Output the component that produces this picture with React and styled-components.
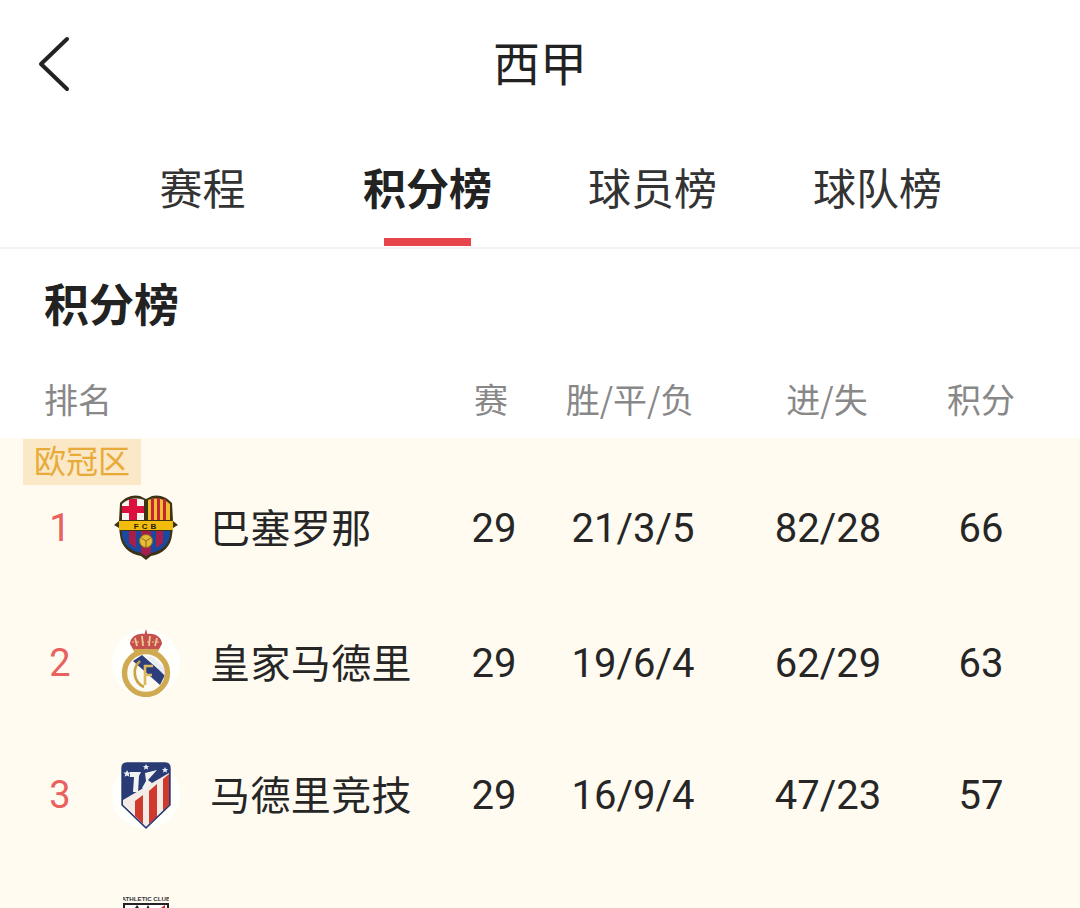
import styled, { createGlobalStyle } from "styled-components";

const GlobalStyle = createGlobalStyle`
  html, body {
    margin: 0;
    padding: 0;
    background: #fff;
  }
  body {
    font-family: "Noto Sans CJK SC", "Noto Sans", sans-serif;
    color: #222;
  }
`;

const Page = styled.div`
  width: 1080px;
  height: 908px;
  overflow: hidden;
  background: #fff;
`;

const Header = styled.div`
  height: 128px;
  display: grid;
  grid-template-columns: 1fr auto 1fr;
  align-items: center;
`;

const BackButton = styled.div`
  padding-left: 37px;
  display: flex;
  align-items: center;
`;

const Title = styled.div`
  font-size: 47px;
  line-height: 60px;
  margin-bottom: 6px;
`;

const Tabs = styled.div`
  display: grid;
  grid-template-columns: repeat(4, 225px);
  padding: 28px 90px 1px;
  border-bottom: 2px solid #f2f2f2;
`;

const Tab = styled.div`
  display: flex;
  flex-direction: column;
  align-items: center;
  gap: 22px;
  font-size: 43px;
  line-height: 60px;
  font-weight: ${({ $active }) => ($active ? 700 : 400)};
  color: ${({ $active }) => ($active ? "#222" : "#333")};
`;

const TabBar = styled.div`
  width: 87px;
  height: 8px;
  background: ${({ $active }) => ($active ? "#e8444c" : "transparent")};
`;

const SectionTitle = styled.h2`
  margin: 0;
  padding: 24px 0 0 44px;
  font-size: 45px;
  line-height: 60px;
  font-weight: 700;
  color: #222;
`;

const columns = "424px 140px 138px 252px 54px";

const TableHead = styled.div`
  display: grid;
  grid-template-columns: ${columns};
  align-items: center;
  margin-top: 41px;
  margin-bottom: 14px;
  height: 50px;
  font-size: 34px;
  line-height: 50px;
  color: #888;
`;

const HeadName = styled.div`
  padding-left: 44px;
`;

const HeadCell = styled.div`
  justify-self: center;
  white-space: nowrap;
  padding-right: ${({ $shift }) => $shift || 0}px;
`;

const Zone = styled.div`
  position: relative;
  padding-top: 23px;
  background: #fffbf1;
`;

const ZoneBadge = styled.div`
  position: absolute;
  top: 1px;
  left: 23px;
  width: 118px;
  height: 46px;
  padding-bottom: 6px;
  box-sizing: border-box;
  display: flex;
  align-items: center;
  justify-content: center;
  background: #fbe8c6;
  color: #e8ab3a;
  font-size: 32px;
  line-height: 40px;
`;

const Row = styled.div`
  display: grid;
  grid-template-columns: ${columns};
  align-items: center;
  height: ${({ $h }) => $h}px;
`;

const Team = styled.div`
  display: flex;
  align-items: center;
`;

const Rank = styled.div`
  width: 120px;
  text-align: center;
  font-family: Roboto, "Noto Sans", sans-serif;
  font-size: 38px;
  color: #e8615f;
`;

const Crest = styled.div`
  width: 68px;
  height: 68px;
  margin-left: -8px;
  margin-right: 30px;
  flex: none;
  border-radius: 50%;
  display: flex;
  align-items: center;
  justify-content: center;
  background: ${({ $plain }) => ($plain ? "transparent" : "#fffffc")};
`;

const TeamName = styled.div`
  font-size: 40px;
  letter-spacing: 0.4px;
  line-height: 56px;
  padding-bottom: 4px;
  white-space: nowrap;
  color: #262626;
`;

const Cell = styled.div`
  text-align: center;
  font-family: Roboto, "Noto Sans", sans-serif;
  font-size: 40px;
  white-space: nowrap;
  color: #262626;
`;

const BackIcon = () => (
  <svg width="34" height="56" viewBox="0 0 34 56">
    <path
      d="M30 3 L4 28 L30 53"
      fill="none"
      stroke="#222"
      strokeWidth="4"
      strokeLinecap="round"
      strokeLinejoin="round"
    />
  </svg>
);

const BarcaCrest = () => (
  <svg width="66" height="68" viewBox="0 0 66 68" style={{ flex: "none" }}>
    <path d="M33 66 L28 62 C16 60 8 52 7 41 L6 34 L1 31 L6 27 L7 9 C12 3 20 0 27 2 L33 5 L39 2 C46 0 54 3 59 9 L60 27 L65 31 L60 34 L59 41 C58 52 50 60 38 62 Z" fill="#3d3214" />
    <path d="M9 10 C14 5 22 3 31 6 V26 H9 Z" fill="#f7f3ee" />
    <path d="M16 5 H24 V12 H31 V19 H24 V26 H16 V19 H9 V12 H16 Z" fill="#dc0f3f" />
    <path d="M35 6 C43 3 52 5 57 10 V26 H35 Z" fill="#efc02a" />
    <path d="M38 5 H41 V26 H38 Z M44 4 H47 V26 H44 Z M50 5 H53 V26 H50 Z" fill="#c4243a" />
    <path d="M6 27 H60 V36 H6 Z" fill="#f2bc0c" />
    <text x="33.5" y="35" textAnchor="middle" fontFamily="Liberation Sans, sans-serif" fontWeight="700" fontSize="8" letterSpacing="3" fill="#1b1a12">FCB</text>
    <path d="M9 37 H57 V41 C56 50 49 57 38 59 L33 62 L28 59 C17 57 10 50 9 41 Z" fill="#1a4aa0" />
    <path d="M16 37 H23 V54 L16 49 Z M28 37 H38 V59 L33 62 L28 59 Z M43 37 H50 V49 L43 54 Z" fill="#a61e4c" />
    <circle cx="33" cy="47" r="6.5" fill="#e6bb36" stroke="#8a6a18" strokeWidth="1" />
    <path d="M28.5 44 L33 47 L37.5 44 M33 47 V53" stroke="#8a6a18" strokeWidth="1" fill="none" />
  </svg>
);

const MadridCrest = () => (
  <svg width="50" height="68" viewBox="0 0 50 68" style={{ flex: "none" }}>
    <path d="M25 0 L26.5 5 C35 4 41 9 41 15 L37 22 H13 L9 15 C9 9 15 4 23.5 5 Z" fill="#c65050" />
    <path d="M14 9 L16 17 M21 7 L22 17 M29 7 L28 17 M36 9 L34 17" stroke="#eccb8a" strokeWidth="1.8" />
    <path d="M11 13 L39 13" stroke="#e8c98a" strokeWidth="1" strokeDasharray="2 3" />
    <path d="M12 20 H38 L36 25 H14 Z" fill="#d0a94f" />
    <circle cx="25" cy="44" r="21" fill="#fbfaf3" />
    <path d="M12 32 L21 26 L44 46 L39 56 Z" fill="#2c3f7c" />
    <path d="M25 27 L31 28 L45 40 L44 47 Z" fill="#e9ecf3" />
    <path d="M19 32 C11 39 12 53 23 58" fill="none" stroke="#c9a245" strokeWidth="2.6" />
    <path d="M32 37 H24 V56 M24 46 H31" fill="none" stroke="#dcb95f" strokeWidth="2.6" />
    <circle cx="25" cy="44" r="21.5" fill="none" stroke="#d0aa52" strokeWidth="5.4" />
  </svg>
);

const AtleticoCrest = () => (
  <svg width="50" height="67" viewBox="0 0 50 67" style={{ flex: "none" }}>
    <path d="M6 1 H44 C47 1 49 3 49 6 V43 L25 66 L1 43 V6 C1 3 3 1 6 1 Z" fill="#2a3a74" />
    <path d="M48 11 V43 L25 65 L2 43 V38 Z" fill="#f3ece6" />
    <path d="M48 12 V43 L42 49 V17 Z M36 22 V55 L28 62 V29 Z M22 33 V62 L14 54 V39 Z" fill="#cf3a2c" />
    <path d="M9 10 H20 L18 14 L17 30 H12 L13 15 H9 Z M24 11 L36 8 L27 18 L31 21 L24 28 L21 26 L25 19 Z" fill="#f2f2f2" />
    <path d="M6 8 l1.2 2.4 2.6 .2 -2 1.6 .7 2.6 -2.5 -1.4 -2.4 1.4 .7 -2.6 -2 -1.6 2.6 -.2 Z M25 2 l1 2 2.2 .2 -1.7 1.3 .6 2.2 -2.1 -1.2 -2 1.2 .6 -2.2 -1.7 -1.3 2.2 -.2 Z M44 5 l1 2 2.2 .2 -1.7 1.3 .6 2.2 -2.1 -1.2 -2 1.2 .6 -2.2 -1.7 -1.3 2.2 -.2 Z" fill="#e9eef7" />
    <path d="M6 1 H44 C47 1 49 3 49 6 V43 L25 66 L1 43 V6 C1 3 3 1 6 1 Z" fill="none" stroke="#2a3a74" strokeWidth="1.4" />
  </svg>
);

const AthleticCrest = () => (
  <svg width="46" height="66" viewBox="0 0 46 66" style={{ flex: "none" }}>
    <text x="23" y="6" textAnchor="middle" fontFamily="Liberation Sans, sans-serif" fontSize="6.2" fontWeight="700" fill="#333">ATHLETIC CLUB</text>
    <rect x="1" y="9" width="44" height="50" fill="#fff" stroke="#222" strokeWidth="2" />
    <path d="M10 16 L14 10 L18 16 Z M22 16 L25 10 L28 16 Z" fill="#222" />
    <path d="M34 16 L42 10 V16 Z" fill="#c8202c" />
  </svg>
);

const teams = [
  { rank: 1, name: "巴塞罗那", crest: <BarcaCrest />, plain: true, h: 134, games: "29", record: "21/3/5", goals: "82/28", points: "66" },
  { rank: 2, name: "皇家马德里", crest: <MadridCrest />, h: 136, games: "29", record: "19/6/4", goals: "62/29", points: "63" },
  { rank: 3, name: "马德里竞技", crest: <AtleticoCrest />, h: 128, games: "29", record: "16/9/4", goals: "47/23", points: "57" },
];

const tabs = ["赛程", "积分榜", "球员榜", "球队榜"];

export default function App() {
  return (
    <Page>
      <GlobalStyle />
      <Header>
        <BackButton>
          <BackIcon />
        </BackButton>
        <Title>西甲</Title>
      </Header>
      <Tabs>
        {tabs.map((tab) => (
          <Tab key={tab} $active={tab === "积分榜"}>
            {tab}
            <TabBar $active={tab === "积分榜"} />
          </Tab>
        ))}
      </Tabs>
      <SectionTitle>积分榜</SectionTitle>
      <TableHead>
        <HeadName>排名</HeadName>
        <HeadCell $shift={6}>赛</HeadCell>
        <HeadCell $shift={6}>胜/平/负</HeadCell>
        <HeadCell $shift={2}>进/失</HeadCell>
        <HeadCell>积分</HeadCell>
      </TableHead>
      <Zone>
        <ZoneBadge>欧冠区</ZoneBadge>
        {teams.map((team) => (
          <Row key={team.rank} $h={team.h}>
            <Team>
              <Rank>{team.rank}</Rank>
              <Crest $plain={team.plain}>{team.crest}</Crest>
              <TeamName>{team.name}</TeamName>
            </Team>
            <Cell>{team.games}</Cell>
            <Cell>{team.record}</Cell>
            <Cell>{team.goals}</Cell>
            <Cell>{team.points}</Cell>
          </Row>
        ))}
        <Row $h={138}>
          <Team>
            <Rank />
            <Crest $plain>
              <AthleticCrest />
            </Crest>
          </Team>
        </Row>
      </Zone>
    </Page>
  );
}
